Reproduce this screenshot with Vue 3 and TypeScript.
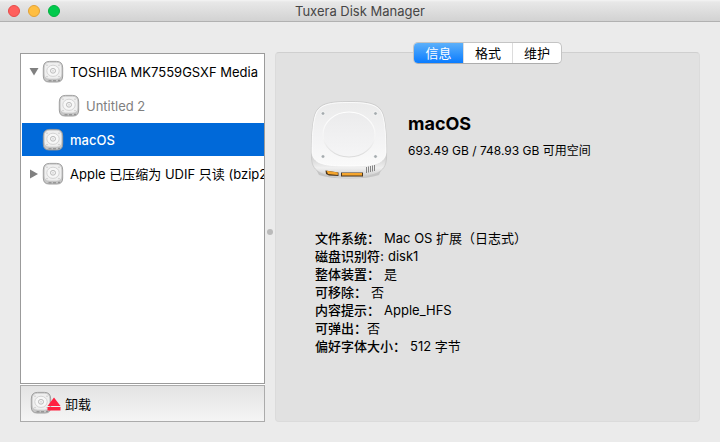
<script setup lang="ts">
import { ref } from 'vue'
import { h, type FunctionalComponent } from 'vue'

interface Volume {
  id: string
  name: string
  level: number
  arrow: 'open' | 'closed' | 'none'
  dimmed?: boolean
}

const volumes: Volume[] = [
  { id: 'toshiba', name: 'TOSHIBA MK7559GSXF Media', level: 0, arrow: 'open' },
  { id: 'untitled', name: 'Untitled 2', level: 1, arrow: 'none', dimmed: true },
  { id: 'macos', name: 'macOS', level: 0, arrow: 'none' },
  { id: 'udif', name: 'Apple 已压缩为 UDIF 只读 (bzip2', level: 0, arrow: 'closed' },
]

const details: { label: string; value: string; gap: boolean }[] = [
  { label: '文件系统：', value: 'Mac OS 扩展（日志式）', gap: true },
  { label: '磁盘识别符:', value: 'disk1', gap: true },
  { label: '整体装置：', value: '是', gap: true },
  { label: '可移除：', value: '否', gap: true },
  { label: '内容提示：', value: 'Apple_HFS', gap: true },
  { label: '可弹出：', value: '否', gap: false },
  { label: '偏好字体大小：', value: '512 字节', gap: true },
]

const tabs = ['信息', '格式', '维护']
const activeTab = ref('信息')
const selected = ref('macos')

const DiskIcon: FunctionalComponent = () =>
  h('svg', { viewBox: '0 0 22 24', width: 22, height: 24, 'aria-hidden': 'true' }, [
    h('path', {
      d: 'M1.3 8 Q1.3 1.4 7.5 1.4 H14.5 Q20.7 1.4 20.7 8 V16 Q20.7 22 15 22 H7 Q1.3 22 1.3 16 Z',
      fill: '#c6c6c6', stroke: '#979797', 'stroke-width': 0.9,
    }),
    h('path', {
      d: 'M2.2 8 Q2.2 2.2 7.5 2.2 H14.5 Q19.8 2.2 19.8 8 V14 Q19.8 19 14.5 19 H7.5 Q2.2 19 2.2 14 Z',
      fill: '#efefef', stroke: '#c0c0c0', 'stroke-width': 0.6,
    }),
    h('ellipse', { cx: 11, cy: 10.8, rx: 6.2, ry: 5.6, fill: '#f7f7f7', stroke: '#cfcfcf', 'stroke-width': 0.9 }),
    h('ellipse', { cx: 11, cy: 10.8, rx: 2.6, ry: 2.4, fill: '#f1f1f1', stroke: '#b8b8b8', 'stroke-width': 0.9 }),
    h('circle', { cx: 11, cy: 10.8, r: 0.6, fill: '#b8b8b8' }),
    h('path', { d: 'M4.5 5.2h1 M16.5 5.2h1 M4.5 16.7h1 M16.5 16.7h1', stroke: '#b0b0b0' }),
    h('path', { d: 'M6.5 20.8h3 M11 20.8h3 M16 20.3h2', stroke: '#858585', 'stroke-width': 1 }),
  ])
</script>

<template>
  <div class="window">
    <header class="titlebar">
      <div class="lights">
        <button class="light close" aria-label="关闭"></button>
        <button class="light minimize" aria-label="最小化"></button>
        <button class="light zoom" aria-label="缩放"></button>
      </div>
      <h1 class="title">Tuxera Disk Manager</h1>
    </header>

    <main class="content">
      <aside class="sidebar">
        <ul class="list">
          <li v-for="v in volumes" :key="v.id">
            <button
              class="row"
              :class="{ child: v.level === 1, dimmed: v.dimmed, selected: selected === v.id }"
              @click="selected = v.id"
            >
              <svg class="arrow" viewBox="0 0 10 10" width="10" height="10" aria-hidden="true">
                <path v-if="v.arrow === 'open'" d="M0.5 1h9L5 8.5z" />
                <path v-else-if="v.arrow === 'closed'" d="M1 0.5v9L9 5z" />
              </svg>
              <DiskIcon class="disk" />
              <span class="name">{{ v.name }}</span>
            </button>
          </li>
        </ul>
        <div class="toolbar">
          <button class="unmount">
            <span class="unmount-icon">
              <DiskIcon />
              <svg class="eject" viewBox="0 0 14 14" width="14" height="14" aria-hidden="true">
                <path d="M7 0.5L13.5 9H0.5z M0.5 10h13v3.5h-13z" fill="#ff2240" />
              </svg>
            </span>
            <span>卸载</span>
          </button>
        </div>
      </aside>

      <div class="splitter"><span class="grip"></span></div>

      <section class="panel">
        <nav class="tabs">
          <button
            v-for="t in tabs"
            :key="t"
            class="tab"
            :class="{ active: activeTab === t }"
            @click="activeTab = t"
          >{{ t }}</button>
        </nav>

        <div class="summary">
          <svg class="drive" viewBox="0 0 80 82" width="80" height="82" aria-hidden="true">
            <defs>
              <linearGradient id="side" x1="0" y1="0" x2="0" y2="1">
                <stop offset="0" stop-color="#e6e6e6" />
                <stop offset="0.76" stop-color="#d6d6d6" />
                <stop offset="0.88" stop-color="#f0f0f0" />
                <stop offset="1" stop-color="#cacaca" />
              </linearGradient>
              <linearGradient id="top" x1="0" y1="0" x2="0" y2="1">
                <stop offset="0" stop-color="#ebebeb" />
                <stop offset="0.5" stop-color="#f2f2f3" />
                <stop offset="1" stop-color="#fafafa" />
              </linearGradient>
              <linearGradient id="plate" x1="0" y1="0" x2="0" y2="1">
                <stop offset="0" stop-color="#ebebec" />
                <stop offset="1" stop-color="#f5f5f6" />
              </linearGradient>
              <linearGradient id="ring" x1="0" y1="0" x2="0" y2="1">
                <stop offset="0" stop-color="#fff" />
                <stop offset="0.6" stop-color="#f4f4f4" />
                <stop offset="1" stop-color="#dadada" />
              </linearGradient>
            </defs>
            <path d="M7 70 Q16 79 40 79 Q64 79 73 69 L70 76 Q60 79.500 40 79.500 Q20 79.500 10 76z" fill="#c4c4c4" />
            <path d="M2.5 59 C2 44 3 24 6 15 C10 4 21 2.5 40 2.5 C59 2.5 70 4 74 15 C77 24 78 44 77.5 59 C77 74 65 78 40 78 C15 78 3 74 2.5 59z" fill="url(#side)" stroke="#c4c4c4" stroke-width="0.7" />
            <path d="M3 53 C3 38 4 24 6.5 16 C10 5 22 3.5 40 3.5 C58 3.5 70 5 73.5 16 C76 24 77 38 77 53 C76 65 65 67 40 67 C15 67 4 65 3 53z" fill="url(#top)" stroke="#fff" stroke-width="0.8" />
            <ellipse cx="40" cy="35.5" rx="26" ry="22.5" fill="url(#plate)" stroke="url(#ring)" stroke-width="1.2" />
            <g fill="#a5abae" stroke="#fff" stroke-width="0.6">
              <circle cx="14" cy="14.5" r="1.8" /><circle cx="66.5" cy="14.5" r="1.8" />
              <circle cx="14" cy="57.5" r="1.8" /><circle cx="66.5" cy="57.5" r="1.8" />
            </g>
            <path d="M16.5 71.500 L29.500 73.500 V77 L20 76.500 L17 75z" fill="#4a3620" />
            <path d="M17.500 71.800 L28.800 73.600 V76 L19 75z" fill="#f5a52c" />
            <path d="M32 73.500 H54 V77.500 H32z" fill="#4a3620" />
            <path d="M33 74 H53 V76.500 H33z" fill="#f5a52c" />
            <path d="M57.5 68v6 M59.500 67.500v6 M61.500 67v6 M63.500 66.500v6 M65.500 66v6" stroke="#858585" stroke-width="1" />
          </svg>
          <div class="heading">
            <h2>macOS</h2>
            <p>693.49 GB / 748.93 GB 可用空间</p>
          </div>
        </div>

        <dl class="details">
          <div v-for="d in details" :key="d.label" class="detail" :class="{ gap: d.gap }">
            <dt>{{ d.label }}</dt>
            <dd>{{ d.value }}</dd>
          </div>
        </dl>
      </section>
    </main>
  </div>
</template>

<style>
body {
  background: #ebebeb;
}
</style>

<style scoped>
.window {
  box-sizing: border-box;
  min-height: 100vh;
  display: flex;
  flex-direction: column;
  background: #ebebeb;
  color: #000;
  font: 13px/18px Inter, "Noto Sans CJK SC", sans-serif;
  overflow: hidden;
}

button {
  margin: 0;
  padding: 0;
  border: 0;
  background: none;
  color: inherit;
  font: inherit;
}

.titlebar {
  box-sizing: border-box;
  height: 22px;
  display: grid;
  grid-template-columns: 1fr auto 1fr;
  align-items: center;
  padding: 0 8px;
  background: linear-gradient(#f4f4f4, #e8e8e8 2px, #d2d2d2);
  border-bottom: 1px solid #b1b1b1;
}

.lights {
  display: flex;
  gap: 8px;
}

.light {
  box-sizing: border-box;
  width: 12px;
  height: 12px;
  border-radius: 50%;
}

.close {
  background: #ff5f5c;
  border: 1px solid #e64b49;
}

.minimize {
  background: #ffbe41;
  border: 1px solid #e2a136;
}

.zoom {
  background: #00ca4c;
  border: 1px solid #02b03f;
}

.title {
  margin: 0;
  font-size: 13px;
  font-weight: 400;
  color: #464646;
}

.content {
  flex: 1;
  display: grid;
  grid-template-columns: minmax(0, 245fr) 10px minmax(0, 425fr);
  padding: 30px 20px 20px;
}

.sidebar {
  display: flex;
  flex-direction: column;
  gap: 1px;
  padding-top: 1px;
  background: linear-gradient(#ebebeb 1px, #fff 1px);
}

.list {
  flex: 1;
  margin: 0;
  padding: 1px 0 0 1px;
  list-style: none;
  background: #fff;
  border: 1px solid #9b9b9b;
}

.row {
  width: 100%;
  height: 34px;
  display: flex;
  align-items: center;
  padding-left: 7px;
  border-bottom: 1px solid #fff;
  overflow: hidden;
  white-space: nowrap;
  text-align: left;
}

.child {
  padding-left: 23px;
}

.dimmed {
  color: #7f7f7f;
}

.selected {
  background: #0069d9;
  color: #fff;
  font-weight: 500;
}

.arrow {
  flex: none;
  margin-right: 3px;
  fill: #808080;
}

.disk {
  flex: none;
  margin-right: 6px;
}

.toolbar {
  box-sizing: border-box;
  height: 37px;
  display: flex;
  align-items: center;
  padding-left: 9px;
  border: 1px solid #ababab;
  background: linear-gradient(#e3e3e3, #f5f5f5);
}

.unmount {
  display: flex;
  align-items: center;
  gap: 4px;
}

.unmount-icon {
  position: relative;
  display: flex;
  width: 31px;
  padding-bottom: 2px;
}

.eject {
  position: absolute;
  right: 0;
  bottom: 6px;
}

.splitter {
  display: flex;
  align-items: center;
  justify-content: center;
  padding-bottom: 10px;
}

.grip {
  width: 6px;
  height: 6px;
  border-radius: 50%;
  background: #bababa;
}

.panel {
  display: flex;
  flex-direction: column;
  background: #e1e1e1;
  border: 1px solid #dbdbdb;
  border-top-color: #cfcfcf;
  border-radius: 4px;
}

.tabs {
  align-self: center;
  display: flex;
  margin-top: -11px;
  border: 1px solid #c4c4c4;
  border-bottom-color: #adadad;
  border-radius: 5px;
  background: #fff;
}

.tab {
  box-sizing: border-box;
  width: 49px;
  height: 20px;
  line-height: 18px;
  border-left: 1px solid #dcdcdc;
}

.tab:first-child {
  border-left: 0;
  border-radius: 4px 0 0 4px;
}

.active {
  color: #fff;
  background: linear-gradient(#5cb0fa, #0a7cff);
}

.summary {
  display: flex;
  gap: 19px;
  padding: 35px 33px 0;
}

.drive {
  flex: none;
}

.heading {
  padding-top: 14px;
}

h2 {
  margin: 0;
  font-size: 18px;
  line-height: 22px;
  font-weight: 700;
}

p {
  margin: 7px 0 0;
  font-size: 12px;
}

.details {
  margin: 0;
  padding: 48px 39px 0;
}

.detail {
  display: flex;
}

.gap {
  gap: 4px;
}

dt {
  font-weight: 500;
}

dd {
  margin: 0;
}
</style>
